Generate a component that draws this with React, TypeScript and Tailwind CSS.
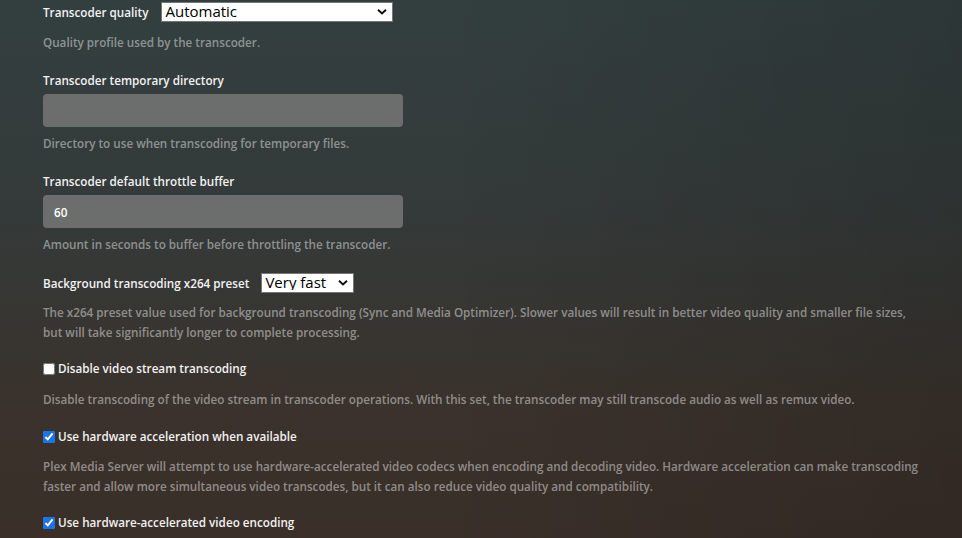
import { useState } from "react";

const Chevron = () => (
  <svg
    width="10"
    height="7"
    viewBox="0 0 10 7"
    className="pointer-events-none absolute right-[6px] top-1/2 -translate-y-1/2"
  >
    <path d="M1 1.2 L5 5 L9 1.2" fill="none" stroke="#111" strokeWidth="1.9" />
  </svg>
);

const Select = ({ value, options, width }: { value: string; options: string[]; width: string }) => (
  <div className={`relative h-[20px] ${width}`}>
    <select
      defaultValue={value}
      className="block h-full w-full appearance-none border border-[#767676] bg-white pb-[2px] pl-[3px] pt-0 text-[15px] leading-[16px] text-black outline-none"
    >
      {options.map((o) => (
        <option key={o}>{o}</option>
      ))}
    </select>
    <Chevron />
  </div>
);

const Desc = ({ children, className = "" }: { children: React.ReactNode; className?: string }) => (
  <p className={`text-[11.7px] font-semibold leading-[20px] text-white/45 ${className}`}>{children}</p>
);

const Label = ({ children }: { children: React.ReactNode }) => (
  <div className="text-[11.7px] font-semibold leading-[20px] text-[#f2f2f2]">{children}</div>
);

const Check = ({ label, checked }: { label: string; checked: boolean }) => {
  const [on, setOn] = useState(checked);
  return (
    <label className="flex h-[20px] items-center gap-[3px] text-[11.7px] font-semibold text-[#f2f2f2]">
      <input
        type="checkbox"
        checked={on}
        onChange={() => setOn(!on)}
        className="m-0 h-[12px] w-[12px] accent-[#1a73e8]"
      />
      {label}
    </label>
  );
};

export default function App() {
  return (
    <div
      className="h-[538px] w-full overflow-hidden bg-[linear-gradient(90deg,transparent_45%,rgba(0,0,0,0.14)),linear-gradient(180deg,#333f3f_0%,#343a39_40%,#3a322c_75%,#3a2f29_100%)] pl-[43px]"
      style={{ fontFamily: '"Open Sans", "Noto Sans", sans-serif' }}
    >
      <div className="w-[880px]">
        <div className="flex h-[23px] items-center gap-[13px]">
          <Label>Transcoder quality</Label>
          <Select value="Automatic" options={["Automatic", "Speed", "Balanced", "Quality"]} width="w-[232px]" />
        </div>
        <Desc className="mt-[9px]">Quality profile used by the transcoder.</Desc>

        <div className="mt-[18px]">
          <Label>Transcoder temporary directory</Label>
          <input
            type="text"
            className="mt-[4px] h-[33px] w-[360px] rounded-[4px] bg-[#6b6e6c] px-[11px] text-[11.7px] font-semibold text-white outline-none"
          />
          <Desc className="mt-[6px]">Directory to use when transcoding for temporary files.</Desc>
        </div>

        <div className="mt-[18px]">
          <Label>Transcoder default throttle buffer</Label>
          <input
            type="text"
            defaultValue="60"
            className="mt-[4px] h-[33px] w-[360px] rounded-[4px] bg-[#6b6e6c] px-[11px] text-[11.7px] font-semibold text-white outline-none"
          />
          <Desc className="mt-[6px]">Amount in seconds to buffer before throttling the transcoder.</Desc>
        </div>

        <div className="mt-[18px]">
          <div className="flex h-[21px] items-center gap-[12px]">
            <Label>Background transcoding x264 preset</Label>
            <Select
              value="Very fast"
              options={["Ultra fast", "Super fast", "Very fast", "Faster", "Fast", "Medium", "Slow", "Slower", "Very slow"]}
              width="w-[93px]"
            />
          </div>
          <Desc className="mt-[9px]">
            The x264 preset value used for background transcoding (Sync and Media Optimizer). Slower values will result
            in better video quality and smaller file sizes, but will take significantly longer to complete processing.
          </Desc>
        </div>

        <div className="mt-[17px]">
          <Check label="Disable video stream transcoding" checked={false} />
          <Desc className="mt-[10px]">
            Disable transcoding of the video stream in transcoder operations. With this set, the transcoder may still
            transcode audio as well as remux video.
          </Desc>
        </div>

        <div className="mt-[18px]">
          <Check label="Use hardware acceleration when available" checked={true} />
          <Desc className="mt-[9px]">
            Plex Media Server will attempt to use hardware-accelerated video codecs when encoding and decoding video.
            Hardware acceleration can make transcoding faster and allow more simultaneous video transcodes, but it can
            also reduce video quality and compatibility.
          </Desc>
        </div>

        <div className="mt-[17px]">
          <Check label="Use hardware-accelerated video encoding" checked={true} />
        </div>
      </div>
    </div>
  );
}
